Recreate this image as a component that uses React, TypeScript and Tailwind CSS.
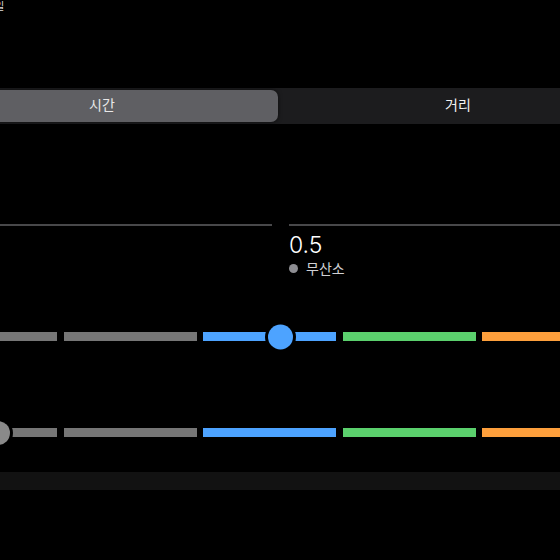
import React from "react";

const segments = ["bg-[#767676]", "bg-[#767676]", "bg-[#4da3ff]", "bg-[#5bd06d]", "bg-[#fd9f3c]"];

function Track({ thumbLeft, thumbColor, thumbSize }: { thumbLeft: string; thumbColor: string; thumbSize: string }) {
  return (
    <div className="relative ml-[-76px] w-[691px] h-[29px] flex items-center gap-[6.5px]">
      {segments.map((c, i) => (
        <div key={i} className={`w-[133px] h-[9px] shrink-0 ${c}`} />
      ))}
      <div
        className={`absolute top-1/2 -translate-y-1/2 rounded-full ring-[3px] ring-black ${thumbLeft} ${thumbColor} ${thumbSize}`}
      />
    </div>
  );
}

export default function App() {
  return (
    <div className="relative w-[560px] h-[560px] overflow-hidden bg-black text-white font-['Inter','Noto_Sans_CJK_KR',sans-serif]">
      <div className="h-[12px] ml-[-5px] text-[10px] leading-[12px] text-[#dddddd] font-['Noto_Sans_CJK_KR',sans-serif]">
        일
      </div>

      {/* segmented control */}
      <div className="mt-[76px] ml-[-76px] w-[716px] h-[36px] p-[2px] flex bg-[#1c1c1e]">
        <div className="w-[352px] pb-[3px] rounded-[7px] bg-[#5f5f63] shadow-[0_0_4px_rgba(0,0,0,0.6)] flex items-center justify-center text-[14px] text-[#e8e8e8] font-['Noto_Sans_CJK_KR',sans-serif]">
          시간
        </div>
        <div className="flex-1 pb-[3px] flex items-center justify-center text-[14px] text-[#f2f2f2] font-['Noto_Sans_CJK_KR',sans-serif]">
          거리
        </div>
      </div>

      {/* divider */}
      <div className="mt-[100px] flex h-[2px]">
        <div className="w-[272px] bg-[#48484a]" />
        <div className="w-[17px]" />
        <div className="flex-1 bg-[#48484a]" />
      </div>

      <div className="ml-[289px] mt-[5px]">
        <div className="text-[23px] leading-[28px] font-light">0.5</div>
        <div className="flex items-center gap-[8px] h-[18px] text-[14px] text-[#d0d0d4] font-['Noto_Sans_CJK_KR',sans-serif]">
          <span className="w-[9px] h-[9px] rounded-full bg-[#8e8e93]" />
          무산소
        </div>
      </div>

      <div className="mt-[45px]">
        <Track thumbLeft="left-[343.5px]" thumbColor="bg-[#4da3ff]" thumbSize="w-[25px] h-[25px]" />
      </div>

      <div className="mt-[67px]">
        <Track thumbLeft="left-[62px]" thumbColor="bg-[#8a8a8a]" thumbSize="w-[24px] h-[24px]" />
      </div>

      <div className="mt-[25px] h-[18px] bg-[#121212]" />
    </div>
  );
}
